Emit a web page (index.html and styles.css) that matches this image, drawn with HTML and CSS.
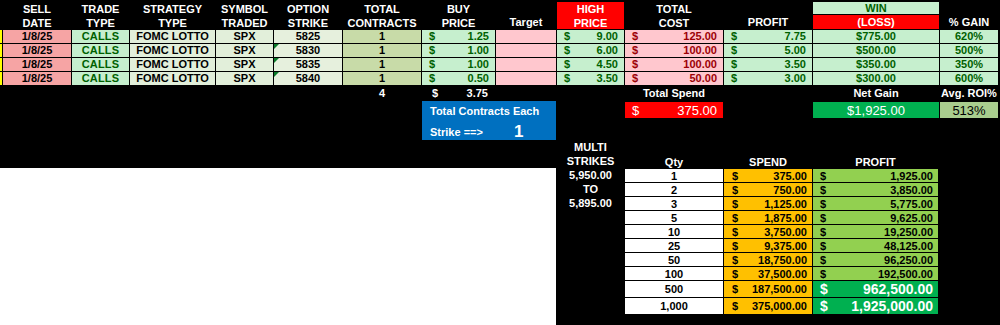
FILE: index.html
```html
<!DOCTYPE html>
<html>
<head>
<meta charset="utf-8">
<link rel="stylesheet" href="styles.css">
</head>
<body>
<div class="sheet">
  <div class="top">
    <div class="h stripe-h"></div>
    <div class="h">SELL<br>DATE</div>
    <div class="h">TRADE<br>TYPE</div>
    <div class="h">STRATEGY<br>TYPE</div>
    <div class="h">SYMBOL<br>TRADED</div>
    <div class="h">OPTION<br>STRIKE</div>
    <div class="h">TOTAL<br>CONTRACTS</div>
    <div class="h">BUY<br>PRICE</div>
    <div class="h end">Target</div>
    <div class="h red">HIGH<br>PRICE</div>
    <div class="h">TOTAL<br>COST</div>
    <div class="h end">PROFIT</div>
    <div class="h-win">WIN</div>
    <div class="h-loss">(LOSS)</div>
    <div class="h end">% GAIN</div>

    <div class="stripe"></div>
    <div class="c date">1/8/25</div>
    <div class="c calls">CALLS</div>
    <div class="c strat">FOMC LOTTO</div>
    <div class="c strat">SPX</div>
    <div class="c strike">5825</div>
    <div class="c qty">1</div>
    <div class="c good money"><span>$</span><span>1.25</span></div>
    <div class="c bad"></div>
    <div class="c good money"><span>$</span><span>9.00</span></div>
    <div class="c bad money"><span>$</span><span>125.00</span></div>
    <div class="c good money"><span>$</span><span>7.75</span></div>
    <div class="c good">$775.00</div>
    <div class="c good">620%</div>

    <div class="stripe"></div>
    <div class="c date">1/8/25</div>
    <div class="c calls">CALLS</div>
    <div class="c strat">FOMC LOTTO</div>
    <div class="c strat">SPX</div>
    <div class="c strike flag">5830</div>
    <div class="c qty">1</div>
    <div class="c good money"><span>$</span><span>1.00</span></div>
    <div class="c bad"></div>
    <div class="c good money"><span>$</span><span>6.00</span></div>
    <div class="c bad money"><span>$</span><span>100.00</span></div>
    <div class="c good money"><span>$</span><span>5.00</span></div>
    <div class="c good">$500.00</div>
    <div class="c good">500%</div>

    <div class="stripe"></div>
    <div class="c date">1/8/25</div>
    <div class="c calls">CALLS</div>
    <div class="c strat">FOMC LOTTO</div>
    <div class="c strat">SPX</div>
    <div class="c strike flag">5835</div>
    <div class="c qty">1</div>
    <div class="c good money"><span>$</span><span>1.00</span></div>
    <div class="c bad"></div>
    <div class="c good money"><span>$</span><span>4.50</span></div>
    <div class="c bad money"><span>$</span><span>100.00</span></div>
    <div class="c good money"><span>$</span><span>3.50</span></div>
    <div class="c good">$350.00</div>
    <div class="c good">350%</div>

    <div class="stripe"></div>
    <div class="c date">1/8/25</div>
    <div class="c calls">CALLS</div>
    <div class="c strat">FOMC LOTTO</div>
    <div class="c strat">SPX</div>
    <div class="c strike flag">5840</div>
    <div class="c qty">1</div>
    <div class="c good money"><span>$</span><span>0.50</span></div>
    <div class="c bad"></div>
    <div class="c good money"><span>$</span><span>3.50</span></div>
    <div class="c bad money"><span>$</span><span>50.00</span></div>
    <div class="c good money"><span>$</span><span>3.00</span></div>
    <div class="c good">$300.00</div>
    <div class="c good">600%</div>

    <div class="t tot-qty">4</div>
    <div class="t tot-buy"><span>$</span><span>3.75</span></div>
    <div class="t tot-spend-l">Total Spend</div>
    <div class="t tot-gain-l">Net Gain</div>
    <div class="t tot-roi-l">Avg. ROI%</div>

    <div class="blue">
      <div>Total Contracts Each</div>
      <div class="blue-row"><span>Strike ==&gt;</span><span class="blue-num">1</span></div>
    </div>
    <div class="box spend"><span>$</span><span>375.00</span></div>
    <div class="box gain">$1,925.00</div>
    <div class="box roi">513%</div>
  </div>

  <div class="bottom">
    <div class="white"></div>
    <div class="labels">
      <div>MULTI</div>
      <div>STRIKES</div>
      <div>5,950.00</div>
      <div>TO</div>
      <div>5,895.00</div>
    </div>
    <div class="multi">
      <div class="bh">Qty</div><div class="bh">SPEND</div><div class="bh">PROFIT</div>
      <div class="q">1</div><div class="s"><span>$</span><span>375.00</span></div><div class="p"><span>$</span><span>1,925.00</span></div>
      <div class="q">2</div><div class="s"><span>$</span><span>750.00</span></div><div class="p"><span>$</span><span>3,850.00</span></div>
      <div class="q">3</div><div class="s"><span>$</span><span>1,125.00</span></div><div class="p"><span>$</span><span>5,775.00</span></div>
      <div class="q">5</div><div class="s"><span>$</span><span>1,875.00</span></div><div class="p"><span>$</span><span>9,625.00</span></div>
      <div class="q">10</div><div class="s"><span>$</span><span>3,750.00</span></div><div class="p"><span>$</span><span>19,250.00</span></div>
      <div class="q">25</div><div class="s"><span>$</span><span>9,375.00</span></div><div class="p"><span>$</span><span>48,125.00</span></div>
      <div class="q">50</div><div class="s"><span>$</span><span>18,750.00</span></div><div class="p"><span>$</span><span>96,250.00</span></div>
      <div class="q">100</div><div class="s"><span>$</span><span>37,500.00</span></div><div class="p"><span>$</span><span>192,500.00</span></div>
      <div class="q">500</div><div class="s"><span>$</span><span>187,500.00</span></div><div class="p big"><span>$</span><span>962,500.00</span></div>
      <div class="q">1,000</div><div class="s"><span>$</span><span>375,000.00</span></div><div class="p big"><span>$</span><span>1,925,000.00</span></div>
    </div>
  </div>
</div>
</body>
</html>
```
FILE: styles.css
```css
* { box-sizing: border-box; }
html, body { margin: 0; padding: 0; background: #000; }
body {
  width: 1000px;
  height: 325px;
  overflow: hidden;
  font-family: "Liberation Sans", Arial, sans-serif;
  font-weight: bold;
  font-size: 11px;
  color: #fff;
}
.sheet { display: flex; flex-direction: column; }

.top {
  display: grid;
  grid-template-columns: 2px 68px 57px 85px 57px 68px 78px 73px 60px 67px 98px 88px 126px 58px;
  grid-template-rows: 12px 14px 13px 13px 13px 13px 14px 17px 21px;
  column-gap: 1px;
  row-gap: 1px;
  padding-top: 2px;
}
.h {
  grid-row: 1 / 3;
  display: flex;
  flex-direction: column;
  justify-content: center;
  align-items: center;
  text-align: center;
  line-height: 14px;
  color: #fff;
}
.h.end { justify-content: flex-end; }
.h.red { background: #ff0000; }
.h-win {
  grid-row: 1; grid-column: 13;
  background: #c6efce; color: #006100;
  display: flex; align-items: center; justify-content: center;
}
.h-loss {
  grid-row: 2; grid-column: 13;
  background: #ff0000; color: #fff;
  display: flex; align-items: center; justify-content: center;
}
.stripe { background: #ffff00; }

.c {
  display: flex;
  align-items: center;
  justify-content: center;
  color: #000;
  line-height: 13px;
  position: relative;
}
.date { background: #f6a4a4; }
.calls { background: #c6efce; color: #006100; letter-spacing: 0.2px; }
.strat { background: #e2efda; }
.strike { background: #e6f0dd; }
.qty { background: #c8dba8; }
.good { background: #c6efce; color: #006100; }
.bad { background: #ffc7ce; color: #9c0006; }
.flag::before {
  content: "";
  position: absolute;
  left: 0; top: 0;
  border-top: 5px solid #0a7a2a;
  border-right: 5px solid transparent;
}

.money { justify-content: space-between; padding: 0 6px 0 7px; }

.t { display: flex; align-items: center; justify-content: center; color: #fff; grid-row: 7; }
.tot-qty { grid-column: 7; }
.tot-buy { grid-column: 8; padding: 0 7px 0 10px; justify-content: space-between; }
.tot-spend-l { grid-column: 11; }
.tot-gain-l { grid-column: 13; }
.tot-roi-l { grid-column: 14; }

.blue {
  grid-column: 8 / 10;
  grid-row: 8 / 10;
  background: #0070c0;
  color: #fff;
  padding: 3px 0 0 8px;
  display: flex;
  flex-direction: column;
  gap: 7px;
  line-height: 14px;
}
.blue-row { display: flex; align-items: center; }
.blue-num { font-size: 17px; margin-left: 31px; }

.box {
  grid-row: 8;
  margin-top: 1px;
  display: flex; align-items: center; justify-content: center;
  font-size: 13px;
  font-weight: normal;
  color: #fff;
}
.box.spend { grid-column: 11; background: #ff0000; justify-content: space-between; padding: 0 6px 0 7px; }
.box.gain { grid-column: 13; background: #00b050; }
.box.roi { grid-column: 14; background: #a9cd8e; color: #000; }

.bottom {
  display: grid;
  grid-template-columns: 556px 67px 313px;
  grid-template-rows: 27px 157px;
  column-gap: 1px;
  margin-top: 1px;
}
.white { grid-column: 1; grid-row: 2; background: #fff; }
.labels {
  grid-column: 2;
  grid-row: 1 / 3;
  display: grid;
  grid-auto-rows: 13px;
  row-gap: 1px;
  align-content: start;
  text-align: center;
  line-height: 13px;
}
.multi {
  grid-column: 3;
  grid-row: 1 / 3;
  display: grid;
  grid-template-columns: 98px 88px 125px;
  grid-template-rows: 13px repeat(8, 13px) 16px 16px;
  column-gap: 1px;
  row-gap: 1px;
  padding-top: 14px;
  align-content: start;
}
.bh { display: flex; align-items: center; justify-content: center; color: #fff; }
.q { background: #fff; color: #000; display: flex; align-items: center; justify-content: center; }
.s { background: #ffc000; color: #000; display: flex; align-items: center; justify-content: space-between; padding: 0 5px 0 8px; }
.p { background: #92d050; color: #000; display: flex; align-items: center; justify-content: space-between; padding: 0 5px 0 7px; }
.p.big { background: #00b050; color: #fff; font-size: 14px; }
```
